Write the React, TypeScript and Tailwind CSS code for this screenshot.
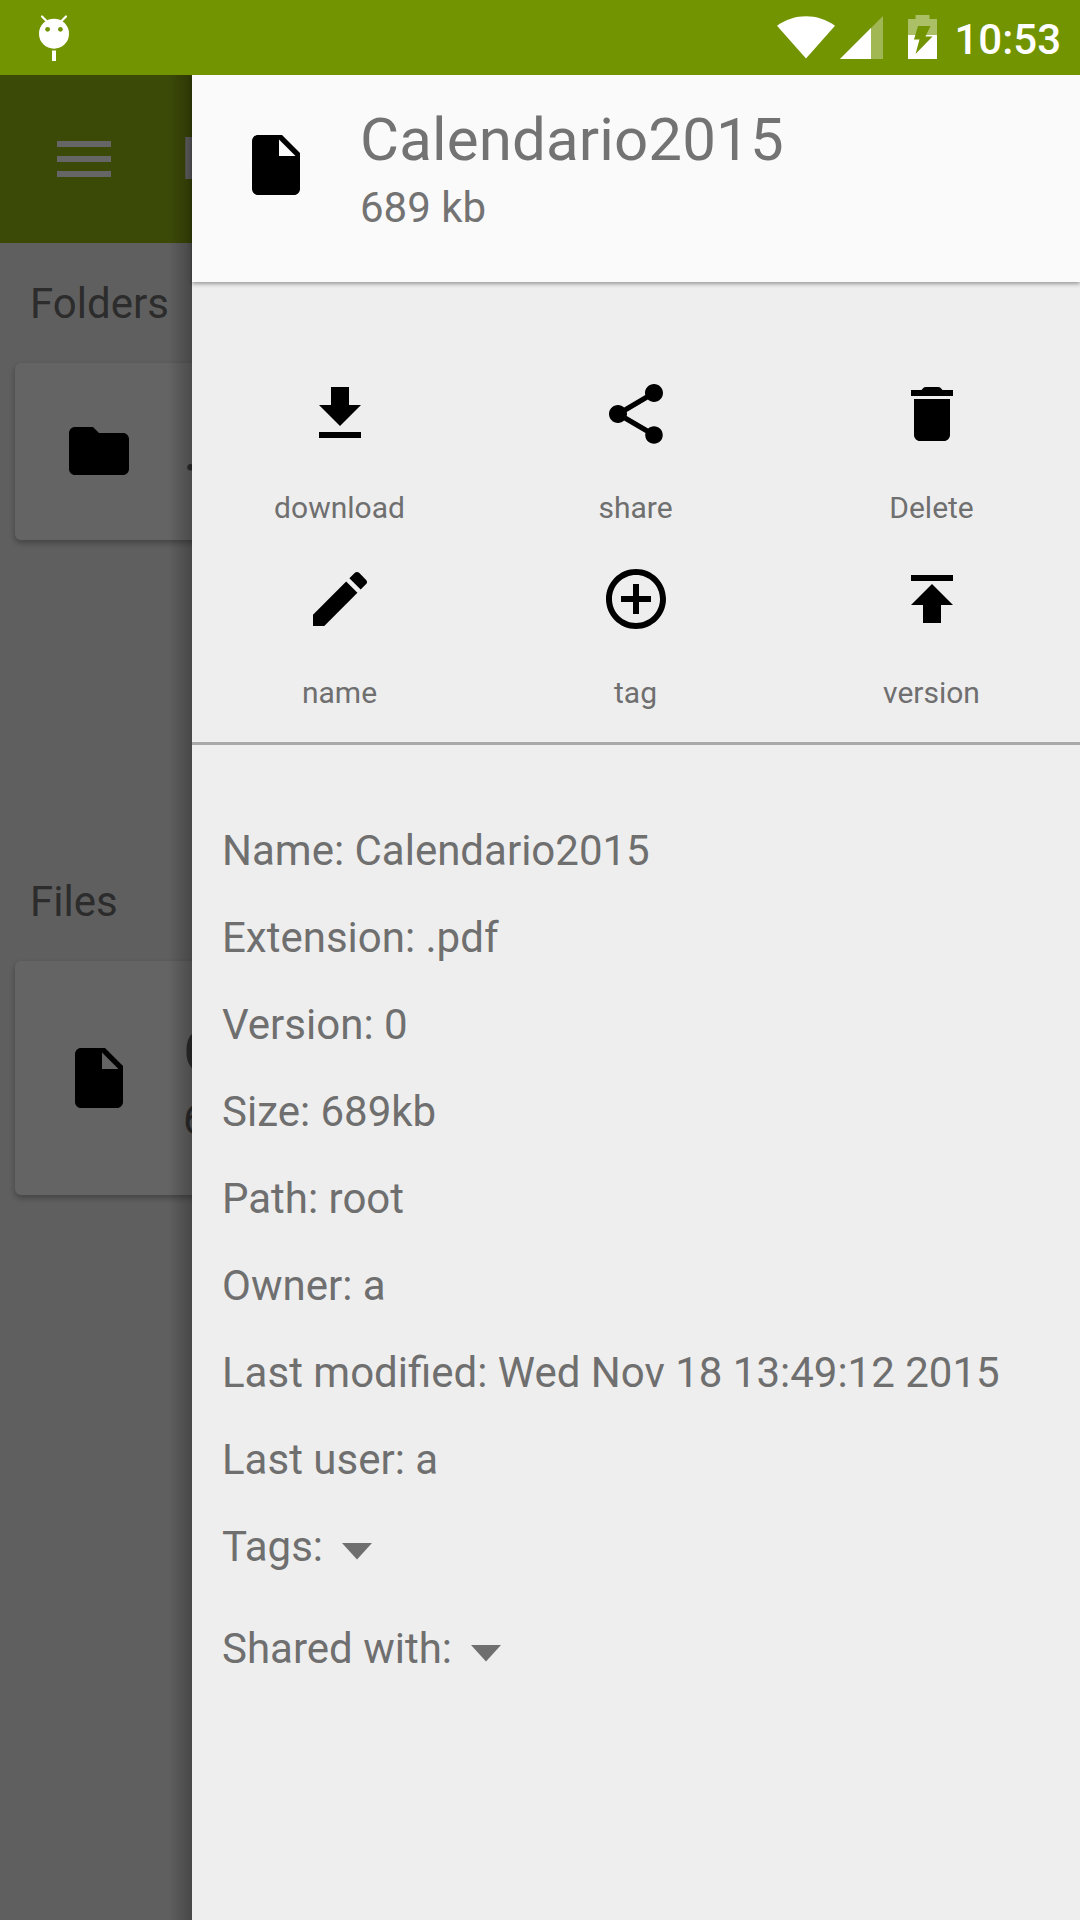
import React from "react";

const ICONS = {
  file: "M6 2c-1.1 0-1.99.9-1.99 2L4 20c0 1.1.89 2 1.99 2H18c1.1 0 2-.9 2-2V8l-6-6H6zm7 7V3.5L18.5 9H13z",
  folder: "M10 4H4c-1.1 0-1.99.9-1.99 2L2 18c0 1.1.9 2 2 2h16c1.1 0 2-.9 2-2V8c0-1.1-.9-2-2-2h-8l-2-2z",
  menu: "M3 18h18v-2H3v2zm0-5h18v-2H3v2zm0-7v2h18V6H3z",
  download: "M19 9h-4V3H9v6H5l7 7 7-7zM5 18v2h14v-2H5z",
  share:
    "M18 16.08c-.76 0-1.44.3-1.96.77L8.91 12.7c.05-.23.09-.46.09-.7s-.04-.47-.09-.7l7.05-4.11c.54.5 1.25.81 2.04.81 1.66 0 3-1.34 3-3s-1.34-3-3-3-3 1.34-3 3c0 .24.04.47.09.7L8.04 9.81C7.5 9.31 6.79 9 6 9c-1.66 0-3 1.34-3 3s1.34 3 3 3c.79 0 1.5-.31 2.04-.81l7.12 4.16c-.05.21-.08.43-.08.65 0 1.61 1.31 2.92 2.92 2.92s2.92-1.31 2.92-2.92-1.31-2.92-2.92-2.92z",
  trash:
    "M6 19c0 1.1.9 2 2 2h8c1.1 0 2-.9 2-2V7H6v12zM19 4h-3.5l-.6-.7c-.2-.2-.5-.3-.8-.3H9.9c-.3 0-.6.1-.8.3l-.6.7H5v2h14V4z",
  edit: "M3 17.25V21h3.75L17.81 9.94l-3.75-3.75L3 17.25zM20.71 7.04c.39-.39.39-1.02 0-1.41l-2.34-2.34c-.39-.39-1.02-.39-1.41 0l-1.83 1.83 3.75 3.75 1.83-1.83z",
  add: "M13 7h-2v4H7v2h4v4h2v-4h4v-2h-4V7zm-1-5C6.48 2 2 6.48 2 12s4.48 10 10 10 10-4.48 10-10S17.52 2 12 2zm0 18c-4.41 0-8-3.59-8-8s3.59-8 8-8 8 3.59 8 8-3.59 8-8 8z",
  publish: "M5 4v2h14V4H5zm0 10h4v6h6v-6h4l-7-7-7 7z",
};

function Icon({ name, className = "" }: { name: keyof typeof ICONS; className?: string }) {
  return (
    <svg viewBox="0 0 24 24" fill="currentColor" className={`size-[72px] shrink-0 ${className}`}>
      <path d={ICONS[name]} />
    </svg>
  );
}

function StatusBar() {
  return (
    <header className="flex h-[75px] items-start justify-between bg-[#729400] text-white">
      <svg viewBox="0 0 32 48" className="mt-[14px] ml-[38px] h-12 w-8">
        <path d="M4 2.5l5 5M28 2.5l-5 5" stroke="white" strokeWidth="2.2" strokeLinecap="round" />
        <circle cx="16" cy="19.7" r="15" fill="white" />
        <circle cx="9.6" cy="15.3" r="2.4" fill="#729400" />
        <circle cx="22.4" cy="15.3" r="2.4" fill="#729400" />
        <rect x="14" y="36.5" width="4" height="10.5" fill="white" />
      </svg>
      <div className="flex items-start">
        <svg viewBox="0 0 58 43" className="mt-4 h-[43px] w-[58px]">
          <path d="M0 9.8C17-3 41-3 58 9.8L29 42.5z" fill="white" />
        </svg>
        <svg viewBox="0 0 43 43" className="mt-4 ml-[5px] h-[43px] w-[43px]">
          <path d="M0 43L43 0V43z" fill="white" fillOpacity="0.33" />
          <path d="M0 43L31 12V43z" fill="white" />
        </svg>
        <svg viewBox="0 0 29 44" className="mt-[15px] ml-[25px] h-11 w-[29px]">
          <path d="M0 4h7.5V0h14v4H29v16H0z" fill="white" fillOpacity="0.4" />
          <path d="M0 20h29v24H0z" fill="white" />
          <path d="M10 11h12.5l-5 10.5h7L7.5 39l4-14.5H6z" fill="#729400" />
        </svg>
        <span className="mt-[15px] mr-[19px] ml-[17px] text-[42px] leading-[49px] font-medium">10:53</span>
      </div>
    </header>
  );
}

function Browser() {
  return (
    <main className="h-[1845px] w-[192px] overflow-hidden bg-[#eeeeee] whitespace-nowrap text-[#6f6f6f]">
      <div className="flex h-[168px] items-center bg-[#96b915] text-white">
        <Icon name="menu" className="ml-12" />
        <span className="ml-[61px] text-[60px] leading-[70px] font-medium">Files</span>
      </div>
      <h2 className="mt-9 ml-[30px] text-[42px] leading-[49px]">Folders</h2>
      <div className="mt-[35px] ml-[15px] flex h-[177px] w-[1050px] items-start rounded-[6px] bg-[#fafafa] pt-[52px] pl-12 shadow-[0_3px_6px_rgba(0,0,0,0.3)]">
        <Icon name="folder" className="text-black" />
        <span className="ml-12 text-[60px] leading-[70px]">..</span>
      </div>
      <h2 className="mt-[337px] ml-[30px] text-[42px] leading-[49px]">Files</h2>
      <div className="mt-[35px] ml-[15px] flex h-[234px] w-[1050px] items-center rounded-[6px] bg-[#fafafa] pl-12 shadow-[0_3px_6px_rgba(0,0,0,0.3)]">
        <Icon name="file" className="text-black" />
        <div className="mt-[5px] ml-12">
          <p className="text-[60px] leading-[70px]">Calendario2015</p>
          <p className="mt-2 text-[42px] leading-[49px]">689 kb</p>
        </div>
      </div>
    </main>
  );
}

const ACTIONS: { icon: keyof typeof ICONS; label: string }[] = [
  { icon: "download", label: "download" },
  { icon: "share", label: "share" },
  { icon: "trash", label: "Delete" },
  { icon: "edit", label: "name" },
  { icon: "add", label: "tag" },
  { icon: "publish", label: "version" },
];

const DETAILS = [
  "Name: Calendario2015",
  "Extension: .pdf",
  "Version: 0",
  "Size: 689kb",
  "Path: root",
  "Owner: a",
  "Last modified: Wed Nov 18 13:49:12 2015",
  "Last user: a",
];

function Expandable({ label }: { label: string }) {
  return (
    <div className="flex items-center">
      <span>{label}</span>
      <svg viewBox="0 0 30 17" className="mt-[9px] ml-[19px] h-[17px] w-[30px]">
        <path d="M0 0h30L15 16.5z" fill="currentColor" />
      </svg>
    </div>
  );
}

function Drawer() {
  return (
    <aside className="flex h-full w-[888px] flex-col bg-[#eeeeee] text-[#6f6f6f]">
      <div className="flex h-[207px] shrink-0 bg-[#fafafa] pt-[30px] pl-12 text-[#737373] shadow-[0_2px_4px_rgba(0,0,0,0.35)]">
        <Icon name="file" className="mt-6 text-black" />
        <div className="ml-12">
          <h1 className="text-[60px] leading-[70px] tracking-[0.15px]">Calendario2015</h1>
          <p className="mt-2 text-[42px] leading-[49px]">689 kb</p>
        </div>
      </div>
      <div className="grid h-[463px] shrink-0 grid-cols-3 content-start border-b-[3px] border-[#a9a9a9] pt-24">
        {ACTIONS.map((a) => (
          <button key={a.label} className="flex h-[185px] flex-col items-center">
            <Icon name={a.icon} className="text-black" />
            <span className="mt-10 mr-px text-[30px] leading-9">{a.label}</span>
          </button>
        ))}
      </div>
      <div className="flex flex-col pt-[81px] pl-[30px] text-[42px] leading-[49px]">
        <div className="flex flex-col gap-[38px]">
          {DETAILS.map((d) => (
            <p key={d}>{d}</p>
          ))}
        </div>
        <div className="mt-[38px] flex flex-col gap-[53px]">
          <Expandable label="Tags:" />
          <Expandable label="Shared with:" />
        </div>
      </div>
    </aside>
  );
}

export default function App() {
  return (
    <div className="relative h-[1920px] w-[1080px] overflow-hidden font-['Roboto',sans-serif]">
      <StatusBar />
      <Browser />
      <div className="absolute inset-x-0 top-[75px] bottom-0 flex justify-end overflow-hidden bg-black/60">
        <div className="w-6 bg-linear-to-r from-transparent to-black/25" />
        <Drawer />
      </div>
    </div>
  );
}
